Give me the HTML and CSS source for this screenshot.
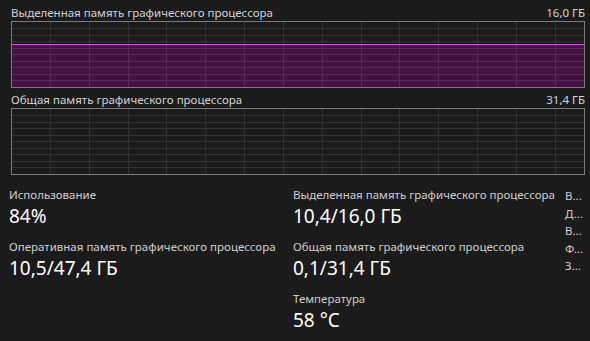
FILE: index.html
```html
<!DOCTYPE html>
<html lang="ru">
<head>
  <meta charset="UTF-8" />
  <title>GPU</title>
  <link rel="stylesheet" href="styles.css">
</head>
<body>
  <!-- Dedicated memory chart -->
  <div class="chart-head">
    <span>Выделенная память графического процессора</span>
    <span>16,0 ГБ</span>
  </div>
  <svg class="chart" width="574" height="67" viewBox="0 0 574 67" shape-rendering="crispEdges">
    <g class="grid">
      <line x1="1" y1="7.5" x2="573" y2="7.5"/>
      <line x1="1" y1="14.5" x2="573" y2="14.5"/>
      <line x1="1" y1="20.5" x2="573" y2="20.5"/>
      <line x1="39.5" y1="1" x2="39.5" y2="66"/>
      <line x1="78.5" y1="1" x2="78.5" y2="66"/>
      <line x1="117.5" y1="1" x2="117.5" y2="66"/>
      <line x1="155.5" y1="1" x2="155.5" y2="66"/>
      <line x1="194.5" y1="1" x2="194.5" y2="66"/>
      <line x1="233.5" y1="1" x2="233.5" y2="66"/>
      <line x1="272.5" y1="1" x2="272.5" y2="66"/>
      <line x1="311.5" y1="1" x2="311.5" y2="66"/>
      <line x1="350.5" y1="1" x2="350.5" y2="66"/>
      <line x1="388.5" y1="1" x2="388.5" y2="66"/>
      <line x1="427.5" y1="1" x2="427.5" y2="66"/>
      <line x1="466.5" y1="1" x2="466.5" y2="66"/>
      <line x1="505.5" y1="1" x2="505.5" y2="66"/>
      <line x1="544.5" y1="1" x2="544.5" y2="66"/>
    </g>
    <rect class="fill" x="1" y="23" width="572" height="43"/>
    <g class="grid-in">
      <line x1="1" y1="27.5" x2="573" y2="27.5"/>
      <line x1="1" y1="33.5" x2="573" y2="33.5"/>
      <line x1="1" y1="40.5" x2="573" y2="40.5"/>
      <line x1="1" y1="46.5" x2="573" y2="46.5"/>
      <line x1="1" y1="53.5" x2="573" y2="53.5"/>
      <line x1="1" y1="59.5" x2="573" y2="59.5"/>
      <line x1="39.5" y1="24" x2="39.5" y2="66"/>
      <line x1="78.5" y1="24" x2="78.5" y2="66"/>
      <line x1="117.5" y1="24" x2="117.5" y2="66"/>
      <line x1="155.5" y1="24" x2="155.5" y2="66"/>
      <line x1="194.5" y1="24" x2="194.5" y2="66"/>
      <line x1="233.5" y1="24" x2="233.5" y2="66"/>
      <line x1="272.5" y1="24" x2="272.5" y2="66"/>
      <line x1="311.5" y1="24" x2="311.5" y2="66"/>
      <line x1="350.5" y1="24" x2="350.5" y2="66"/>
      <line x1="388.5" y1="24" x2="388.5" y2="66"/>
      <line x1="427.5" y1="24" x2="427.5" y2="66"/>
      <line x1="466.5" y1="24" x2="466.5" y2="66"/>
      <line x1="505.5" y1="24" x2="505.5" y2="66"/>
      <line x1="544.5" y1="24" x2="544.5" y2="66"/>
    </g>
    <line class="level" x1="1" y1="23.5" x2="573" y2="23.5"/>
    <rect class="frame" x="0.5" y="0.5" width="573" height="66"/>
  </svg>

  <!-- Shared memory chart -->
  <div class="chart-head">
    <span>Общая память графического процессора</span>
    <span>31,4 ГБ</span>
  </div>
  <svg class="chart" width="574" height="67" viewBox="0 0 574 67" shape-rendering="crispEdges">
    <g class="grid">
      <line x1="1" y1="7.5" x2="573" y2="7.5"/>
      <line x1="1" y1="14.5" x2="573" y2="14.5"/>
      <line x1="1" y1="20.5" x2="573" y2="20.5"/>
      <line x1="1" y1="27.5" x2="573" y2="27.5"/>
      <line x1="1" y1="33.5" x2="573" y2="33.5"/>
      <line x1="1" y1="40.5" x2="573" y2="40.5"/>
      <line x1="1" y1="46.5" x2="573" y2="46.5"/>
      <line x1="1" y1="53.5" x2="573" y2="53.5"/>
      <line x1="1" y1="59.5" x2="573" y2="59.5"/>
      <line x1="39.5" y1="1" x2="39.5" y2="66"/>
      <line x1="78.5" y1="1" x2="78.5" y2="66"/>
      <line x1="117.5" y1="1" x2="117.5" y2="66"/>
      <line x1="155.5" y1="1" x2="155.5" y2="66"/>
      <line x1="194.5" y1="1" x2="194.5" y2="66"/>
      <line x1="233.5" y1="1" x2="233.5" y2="66"/>
      <line x1="272.5" y1="1" x2="272.5" y2="66"/>
      <line x1="311.5" y1="1" x2="311.5" y2="66"/>
      <line x1="350.5" y1="1" x2="350.5" y2="66"/>
      <line x1="388.5" y1="1" x2="388.5" y2="66"/>
      <line x1="427.5" y1="1" x2="427.5" y2="66"/>
      <line x1="466.5" y1="1" x2="466.5" y2="66"/>
      <line x1="505.5" y1="1" x2="505.5" y2="66"/>
      <line x1="544.5" y1="1" x2="544.5" y2="66"/>
    </g>
    <rect class="frame" x="0.5" y="0.5" width="573" height="66"/>
  </svg>

  <!-- Stats -->
  <div class="stats">
    <div class="col col-1">
      <div class="stat">
        <div class="caption">Использование</div>
        <div class="value">84%</div>
      </div>
      <div class="stat">
        <div class="caption">Оперативная память графического процессора</div>
        <div class="value">10,5/47,4 ГБ</div>
      </div>
    </div>
    <div class="col col-2">
      <div class="stat">
        <div class="caption">Выделенная память графического процессора</div>
        <div class="value">10,4/16,0 ГБ</div>
      </div>
      <div class="stat">
        <div class="caption">Общая память графического процессора</div>
        <div class="value">0,1/31,4 ГБ</div>
      </div>
      <div class="stat">
        <div class="caption">Температура</div>
        <div class="value">58 °C</div>
      </div>
    </div>
    <div class="col col-3">
      <div>В...</div>
      <div>Д...</div>
      <div>В...</div>
      <div>Ф...</div>
      <div>З...</div>
    </div>
  </div>
</body>
</html>
```

FILE: styles.css
```css
/* Base */
* {
  box-sizing: border-box;
}
html, body {
  margin: 0;
  padding: 0;
  background: #1b1b1b;
  color: #d6d6d6;
  font-family: 'Noto Sans', 'Open Sans', sans-serif;
  overflow: hidden;
}

/* Chart header */
.chart-head {
  display: flex;
  justify-content: space-between;
  width: 585px;
  padding: 5px 0 0 11px;
  height: 21px;
  font-size: 11.5px;
  line-height: 16px;
  color: #cfd3d6;
}
.chart {
  display: block;
  margin-left: 11px;
}
.chart + .chart-head {
  height: 20px;
  padding-top: 4px;
}

/* Chart pieces */
.grid line {
  stroke: #333333;
  stroke-width: 1;
}
.grid-in line {
  stroke: #5a2a58;
  stroke-width: 1;
}
.fill {
  fill: #431241;
}
.level {
  stroke: #d44ee0;
  stroke-width: 1;
}
.frame {
  fill: none;
  stroke: #7c7c7c;
  stroke-width: 1;
}

/* Stats */
.stats {
  display: flex;
  padding: 11px 0 0 9px;
}
.col-1 {
  width: 284px;
}
.col-2 {
  width: 272px;
}
.col-3 {
  font-size: 11.5px;
  line-height: 17.5px;
  padding-top: 1px;
  color: #d0d0d0;
}
.stat {
  margin-bottom: 8px;
}
.caption {
  font-size: 11.5px;
  line-height: 17px;
  color: #cfcfcf;
}
.value {
  font-size: 19px;
  line-height: 27px;
  color: #ffffff;
}
```
